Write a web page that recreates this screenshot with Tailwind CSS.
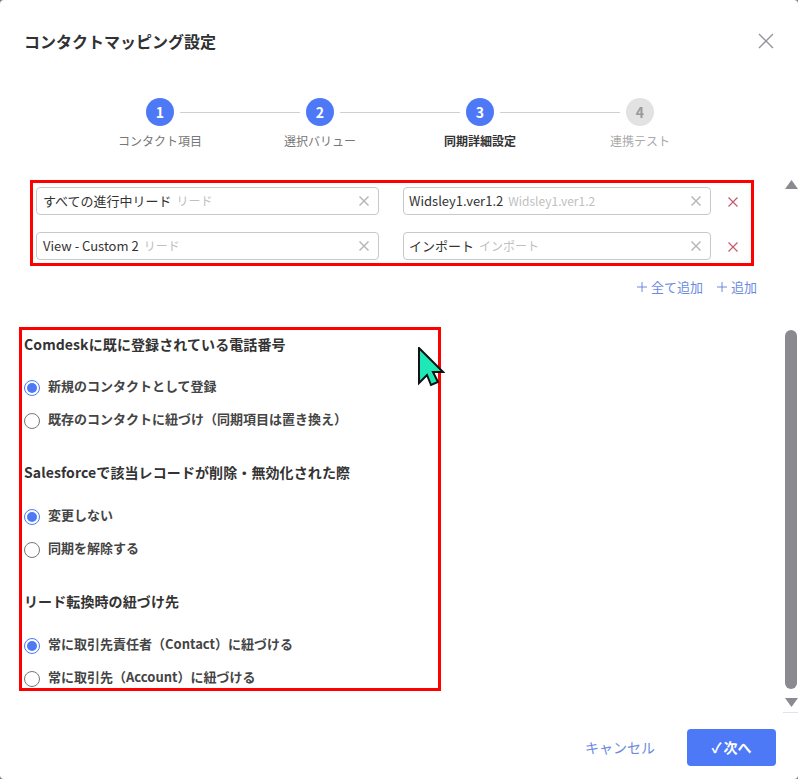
<!DOCTYPE html>
<html lang="ja">
<head>
    <meta charset="UTF-8">
    <title>コンタクトマッピング設定</title>
    <script src="https://cdn.jsdelivr.net/npm/@tailwindcss/browser@4"></script>
</head>
<body class="bg-[#7a7a7a] text-[#333] font-['Noto_Sans_CJK_JP','Noto_Sans',sans-serif]">
    <div class="relative w-[798px] h-[779px] overflow-hidden flex flex-col bg-white rounded-[4px]">
        <!-- Header -->
        <div class="h-[82px] px-6 flex items-center justify-between">
            <h1 class="text-[16px] leading-6 font-bold text-[#303133]">コンタクトマッピング設定</h1>
            <svg class="w-4 h-4 text-[#909399]" fill="none" stroke="currentColor" stroke-width="1.3" viewBox="0 0 16 16"><path d="M1 1l14 14M15 1L1 15"/></svg>
        </div>

        <!-- Stepper -->
        <div class="h-[86px] pt-4 pl-[2px] flex justify-center">
            <div class="w-[160px] flex flex-col items-center relative">
                <div class="w-7 h-7 rounded-full bg-[#4d79f6] text-white text-[14px] font-bold flex items-center justify-center">1</div>
                <div class="absolute left-[100px] top-[14px] w-[120px] h-px bg-[#d0d0d0]"></div>
                <div class="mt-[6px] text-[12px] leading-[18px] text-[#777]">コンタクト項目</div>
            </div>
            <div class="w-[160px] flex flex-col items-center relative">
                <div class="w-7 h-7 rounded-full bg-[#4d79f6] text-white text-[14px] font-bold flex items-center justify-center">2</div>
                <div class="absolute left-[100px] top-[14px] w-[120px] h-px bg-[#d0d0d0]"></div>
                <div class="mt-[6px] text-[12px] leading-[18px] text-[#777]">選択バリュー</div>
            </div>
            <div class="w-[160px] flex flex-col items-center relative">
                <div class="w-7 h-7 rounded-full bg-[#4d79f6] text-white text-[14px] font-bold flex items-center justify-center">3</div>
                <div class="absolute left-[100px] top-[14px] w-[120px] h-px bg-[#d0d0d0]"></div>
                <div class="mt-[6px] text-[12px] leading-[18px] font-bold text-[#333]">同期詳細設定</div>
            </div>
            <div class="w-[160px] flex flex-col items-center">
                <div class="w-7 h-7 rounded-full bg-[#e2e2e2] text-[#999] text-[14px] font-bold flex items-center justify-center">4</div>
                <div class="mt-[6px] text-[12px] leading-[18px] text-[#aaa]">連携テスト</div>
            </div>
        </div>

        <!-- Body -->
        <div class="flex h-[545px]">
            <div class="w-[783px] pt-3">
                <!-- Mapping rows -->
                <div class="ml-[30px] w-[724px] h-[86px] border-[3px] border-[#f00] pl-[3px] pt-1 flex flex-col gap-[17px]">
                    <div class="flex items-center">
                        <div class="w-[343px] h-7 border border-[#c8c8c8] rounded px-[6px] flex items-center">
                            <span class="text-[13px] text-[#333]">すべての進行中リード</span>
                            <span class="ml-[5px] text-[12px] text-[#c0c0c0]">リード</span>
                            <svg class="ml-auto mr-[3px] w-[10px] h-[10px] text-[#b8b8b8]" fill="none" stroke="currentColor" stroke-width="1.5" viewBox="0 0 10 10"><path d="M0.5 0.5l9 9M9.5 0.5l-9 9"/></svg>
                        </div>
                        <div class="ml-6 w-[308px] h-7 border border-[#c8c8c8] rounded px-[5px] flex items-center">
                            <span class="text-[13px] text-[#333]">Widsley1.ver1.2</span>
                            <span class="ml-[5px] text-[12px] text-[#c0c0c0]">Widsley1.ver1.2</span>
                            <svg class="ml-auto mr-[4px] w-[10px] h-[10px] text-[#b8b8b8]" fill="none" stroke="currentColor" stroke-width="1.5" viewBox="0 0 10 10"><path d="M0.5 0.5l9 9M9.5 0.5l-9 9"/></svg>
                        </div>
                        <svg class="ml-[17px] mt-[2px] w-[10px] h-[10px] text-[#c0566a]" fill="none" stroke="currentColor" stroke-width="1.1" viewBox="0 0 10 10"><path d="M0.5 0.5l9 9M9.5 0.5l-9 9"/></svg>
                    </div>
                    <div class="flex items-center">
                        <div class="w-[343px] h-7 border border-[#c8c8c8] rounded px-[6px] flex items-center">
                            <span class="text-[13px] text-[#333]">View - Custom 2</span>
                            <span class="ml-[5px] text-[12px] text-[#c0c0c0]">リード</span>
                            <svg class="ml-auto mr-[3px] w-[10px] h-[10px] text-[#b8b8b8]" fill="none" stroke="currentColor" stroke-width="1.5" viewBox="0 0 10 10"><path d="M0.5 0.5l9 9M9.5 0.5l-9 9"/></svg>
                        </div>
                        <div class="ml-6 w-[308px] h-7 border border-[#c8c8c8] rounded px-[5px] flex items-center">
                            <span class="text-[13px] text-[#333]">インポート</span>
                            <span class="ml-[5px] text-[12px] text-[#c0c0c0]">インポート</span>
                            <svg class="ml-auto mr-[4px] w-[10px] h-[10px] text-[#b8b8b8]" fill="none" stroke="currentColor" stroke-width="1.5" viewBox="0 0 10 10"><path d="M0.5 0.5l9 9M9.5 0.5l-9 9"/></svg>
                        </div>
                        <svg class="ml-[17px] mt-[2px] w-[10px] h-[10px] text-[#c0566a]" fill="none" stroke="currentColor" stroke-width="1.1" viewBox="0 0 10 10"><path d="M0.5 0.5l9 9M9.5 0.5l-9 9"/></svg>
                    </div>
                </div>

                <!-- Add links -->
                <div class="h-[61px] pr-[26px] pt-[11px] flex justify-end items-start gap-[14px] text-[13px] leading-[20px] text-[#6b8ade]">
                    <span class="flex items-center gap-1">
                        <svg class="w-[10px] h-[10px]" fill="none" stroke="currentColor" stroke-width="1" viewBox="0 0 10 10"><path d="M5 0v10M0 5h10"/></svg>
                        全て追加
                    </span>
                    <span class="flex items-center gap-1">
                        <svg class="w-[10px] h-[10px]" fill="none" stroke="currentColor" stroke-width="1" viewBox="0 0 10 10"><path d="M5 0v10M0 5h10"/></svg>
                        追加
                    </span>
                </div>

                <!-- Radio groups -->
                <div class="ml-[19px] w-[422px] h-[364px] border-[3px] border-[#f00] pl-[2px] text-[13px] font-bold text-[#444]">
                    <div class="mt-[2px] h-6 flex items-center text-[14px] tracking-[0.1px] text-[#333]">Comdeskに既に登録されている電話番号</div>
                    <div class="mt-[23px] h-[16px] flex items-center gap-2">
                        <div class="w-4 h-4 mt-[2px] rounded-full border border-[#4d79f6] flex items-center justify-center"><div class="w-[10px] h-[10px] rounded-full bg-[#4d79f6]"></div></div>
                        <span class="-mt-[2px]">新規のコンタクトとして登録</span>
                    </div>
                    <div class="mt-[17px] h-[16px] flex items-center gap-2">
                        <div class="w-4 h-4 mt-[2px] rounded-full border border-[#777]"></div>
                        <span class="-mt-[2px]">既存のコンタクトに紐づけ（同期項目は置き換え）</span>
                    </div>
                    <div class="mt-[32px] h-6 flex items-center text-[14px] tracking-[0.1px] text-[#333]">Salesforceで該当レコードが削除・無効化された際</div>
                    <div class="mt-[24px] h-[16px] flex items-center gap-2">
                        <div class="w-4 h-4 mt-[2px] rounded-full border border-[#4d79f6] flex items-center justify-center"><div class="w-[10px] h-[10px] rounded-full bg-[#4d79f6]"></div></div>
                        <span class="-mt-[2px]">変更しない</span>
                    </div>
                    <div class="mt-[17px] h-[16px] flex items-center gap-2">
                        <div class="w-4 h-4 mt-[2px] rounded-full border border-[#777]"></div>
                        <span class="-mt-[2px]">同期を解除する</span>
                    </div>
                    <div class="mt-[32px] h-6 flex items-center text-[14px] tracking-[0.1px] text-[#333]">リード転換時の紐づけ先</div>
                    <div class="mt-[24px] h-[16px] flex items-center gap-2">
                        <div class="w-4 h-4 mt-[2px] rounded-full border border-[#4d79f6] flex items-center justify-center"><div class="w-[10px] h-[10px] rounded-full bg-[#4d79f6]"></div></div>
                        <span class="-mt-[2px]">常に取引先責任者（Contact）に紐づける</span>
                    </div>
                    <div class="mt-[17px] h-[16px] flex items-center gap-2">
                        <div class="w-4 h-4 mt-[2px] rounded-full border border-[#777]"></div>
                        <span class="-mt-[2px]">常に取引先（Account）に紐づける</span>
                    </div>
                </div>
            </div>

            <!-- Scrollbar -->
            <div class="w-[15px] flex flex-col border-b border-[#dfe3ee]">
                <div class="pl-[2px] pt-3">
                    <svg class="w-[13px] h-[9px] text-[#8b8a90]" fill="currentColor" viewBox="0 0 13 9"><path d="M6.5 0L13 9H0z"/></svg>
                </div>
                <div class="ml-[2px] mt-[141px] w-[12px] h-[359px] rounded-[6px] bg-[#8b8a90]"></div>
                <div class="pl-[2px] mt-[9px]">
                    <svg class="w-[13px] h-[9px] text-[#8b8a90]" fill="currentColor" viewBox="0 0 13 9"><path d="M6.5 9L13 0H0z"/></svg>
                </div>
            </div>
        </div>

        <!-- Footer -->
        <div class="flex-1 pr-[22px] pt-4 flex justify-end items-start">
            <span class="h-[37px] leading-[37px] text-[14px] text-[#6b8ade] mr-8">キャンセル</span>
            <div class="w-[89px] h-[37px] rounded bg-[#4d79f6] text-white text-[14px] font-bold flex items-center justify-center"><span class="mr-[2px]">✓</span>次へ</div>
        </div>

        <!-- Cursor overlay -->
        <svg class="absolute left-[417px] top-[347px] w-[28px] h-[40px]" viewBox="0 0 28 40">
            <path d="M2 1L2 36L10 28L14 38L21 35L16 25L26 25Z" fill="#1de9b6" stroke="#111" stroke-width="2"/>
        </svg>
    </div>
</body>
</html>
